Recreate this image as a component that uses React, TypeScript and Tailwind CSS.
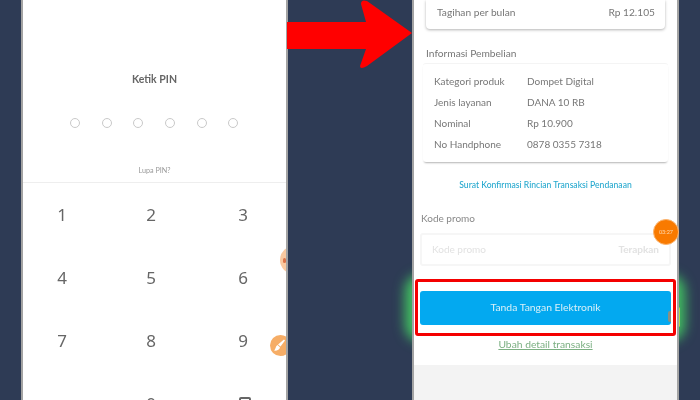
import React from 'react';

const rows = [
  ['Kategori produk', 'Dompet Digital'],
  ['Jenis layanan', 'DANA 10 RB'],
  ['Nominal', 'Rp 10.900'],
  ['No Handphone', '0878 0355 7318'],
];

const keys = ['1', '2', '3', '4', '5', '6', '7', '8', '9'];

const PinScreen = () => (
  <section className="relative w-[267px] h-full bg-white border-x-2 border-[#a3a3a3] flex flex-col">
    {/* PIN entry */}
    <h2 className="mt-[71px] text-center text-[10.5px] leading-4 font-bold text-[#666]">Ketik PIN</h2>
    <div className="mt-[31px] ml-[47px] flex gap-[21.7px]">
      {[0, 1, 2, 3, 4, 5].map((i) => (
        <span key={i} className="w-[10px] h-[10px] rounded-full border border-[#c9c9c9]" />
      ))}
    </div>
    <p className="mt-[38px] text-center text-[7.2px] leading-[10px] text-[#999]">Lupa PIN?</p>
    <div className="mt-[6px] border-t border-[#eeeeee]" />

    {/* Keypad */}
    <div className="mt-[16px] grid grid-cols-[78px_100px_84px] auto-rows-[63px] justify-items-center text-[17px] leading-[32px] text-[#666] font-['Noto_Sans',sans-serif]">
      {keys.map((k) => (
        <span key={k}>{k}</span>
      ))}
      <span />
      <span>0</span>
      <span className="pt-[9px] pl-[3px]">
        <span className="block w-[12px] h-[12px] border-2 border-[#666] rounded-[2px]" />
      </span>
    </div>

    {/* Floating bubbles clipped by the panel edge */}
    <div className="absolute right-0 top-[246px] w-[6px] h-[28px] overflow-hidden">
      <div className="w-[28px] h-[28px] rounded-full bg-[#f9c9a0] flex items-center pl-[3px]">
        <span className="w-[3px] h-[5px] rounded-full bg-[#d9744a]" />
      </div>
    </div>
    <div className="absolute right-0 top-[335px] w-[16px] h-[21px] overflow-hidden">
      <div className="w-[21px] h-[21px] rounded-full bg-[#f6ad66] flex items-center justify-center pr-[3px]">
        <svg width="12" height="13" viewBox="0 0 12 13" fill="white">
          <path d="M11 0.5 L12 1.5 L7.5 7.5 L5 5.5 Z" />
          <path d="M4.4 6 L7 8.2 C6.6 10.6 4 12 1 11.6 C2.6 10.6 2.4 7.4 4.4 6 Z" />
        </svg>
      </div>
    </div>
  </section>
);

const SummaryScreen = () => (
  <section className="relative w-[267px] h-full bg-white border-x-2 border-[#a3a3a3] flex flex-col">
    {/* Monthly bill card */}
    <div className="mx-[12px] h-[29px] pl-[11px] pr-[10px] pb-[10px] flex items-end justify-between bg-white rounded-b-[4px] shadow-[0_1px_3px_rgba(0,0,0,0.3)] text-[10.2px] leading-[14px] text-[#777]">
      <span>Tagihan per bulan</span>
      <span>Rp 12.105</span>
    </div>

    <h3 className="mt-[17px] ml-[12px] text-[10.2px] leading-[14px] text-[#777]">Informasi Pembelian</h3>

    {/* Purchase details card */}
    <div className="mt-[3px] mx-[9px] h-[99px] pl-[11px] pt-[10px] bg-white rounded-[3px] border-t border-[#f4f4f4] shadow-[0_2px_2px_-1px_rgba(0,0,0,0.3)] flex flex-col gap-[7px] text-[10px] leading-[14px] text-[#777]">
      {rows.map(([label, value]) => (
        <div key={label} className="flex">
          <span className="w-[93px]">{label}</span>
          <span>{value}</span>
        </div>
      ))}
    </div>

    <a className="mt-[17px] text-center text-[8.6px] leading-[12px] text-[#27a9cf] font-medium">
      Surat Konfirmasi Rincian Transaksi Pendanaan
    </a>

    <label className="mt-[20px] ml-[7px] text-[10px] leading-[14px] text-[#888]">Kode promo</label>

    <div className="mt-[8px] mx-[6px] h-[33px] px-[10px] flex items-center justify-between border-2 border-[#f6f6f6] rounded-[3px] text-[10px] text-[#e2e2e2]">
      <span>Kode promo</span>
      <span className="font-bold">Terapkan</span>
    </div>

    {/* Highlighted button */}
    <div className="mt-[13px] mx-[1px] h-[57px] border-[3px] border-[#f40000] rounded-[3px] flex items-center px-[2px]">
      <button className="relative w-full h-[34px] rounded-[3px] bg-[#03a9f0] text-[10.4px] text-[#d8f0f8] overflow-hidden">
        Tanda Tangan Elektronik
        <span className="absolute right-0 top-[20px] w-[3px] h-[11px] rounded-l-[2px] bg-[#8c8f80]" />
      </button>
    </div>

    <a className="mt-[1px] text-center text-[10.3px] leading-[14px] text-[#7cb083] underline">Ubah detail transaksi</a>

    <div className="mt-[14px] flex-1 bg-[#f3f3f3]" />

    {/* Timer bubble */}
    <div className="absolute right-[-2px] top-[219px] w-[26px] h-[26px] rounded-full bg-[#f97a00] border border-[#fbb46f] flex items-center justify-center text-[5.5px] text-[#ffd9b0]">
      03:27
    </div>
  </section>
);

export default function App() {
  return (
    <main className="relative w-[700px] h-[400px] overflow-hidden bg-[#2e3b55] flex pl-[21px] gap-[124px] font-['Lato',sans-serif] blur-[0.4px]">
      {/* Green glow behind the right screen */}
      <div className="absolute left-[414px] top-[283px] w-[262px] h-[50px] rounded-[8px] shadow-[0_0_12px_9px_rgba(70,225,100,0.8)]" />
      <span className="absolute left-[677px] top-[307px] w-[3px] h-[20px] rounded-full bg-[#b8d84a]" />

      <PinScreen />
      <SummaryScreen />

      {/* Red arrow between the screens */}
      <svg className="absolute left-[287px] top-0" width="126" height="70" viewBox="0 0 126 70">
        <path
          d="M0 22 H79 L74 4 Q74 -1 80 1 L125 33 L80 66 Q73 70 73 66 L79 49 H0 Z"
          fill="#ff0000"
        />
      </svg>
    </main>
  );
}
